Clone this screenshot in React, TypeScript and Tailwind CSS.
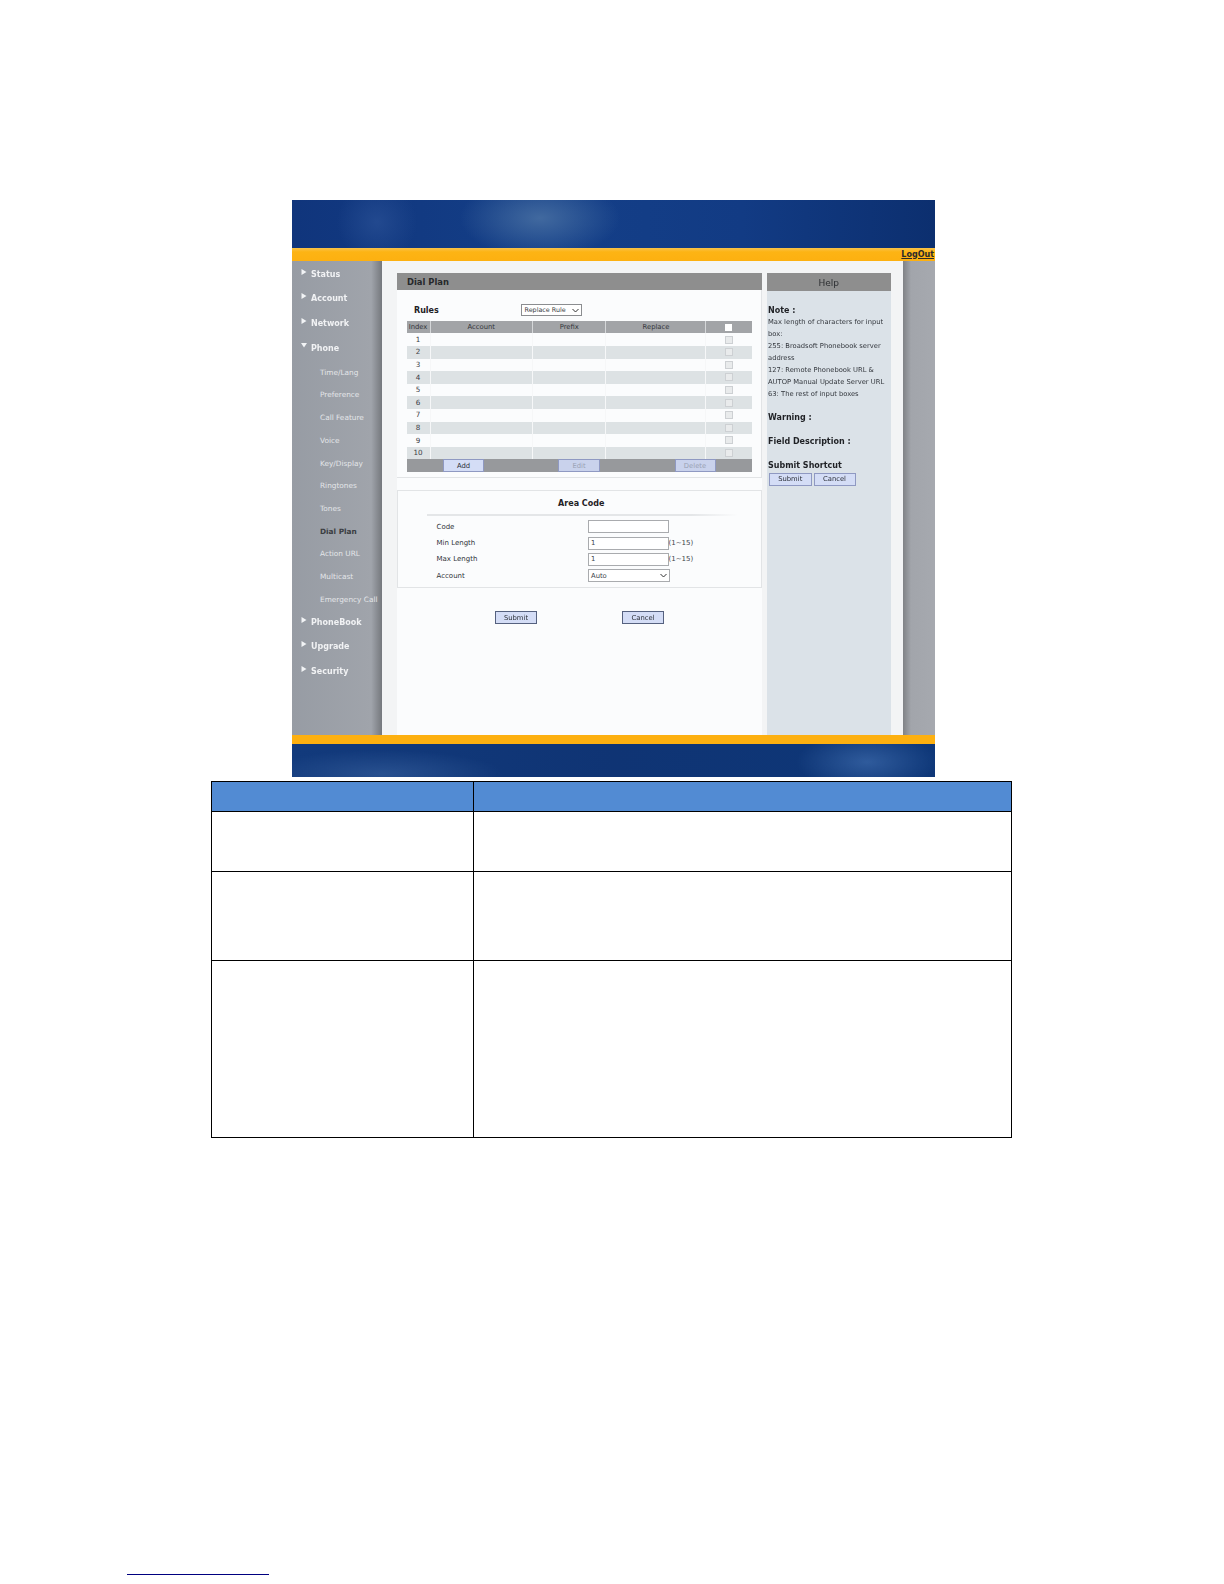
const font = "[font-family:'DejaVu_Sans',Verdana,sans-serif]";

function Tri({ down = false }: { down?: boolean }) {
  return (
    <svg width="6" height="6" viewBox="0 0 6 6" className="absolute left-[9px] top-[6px]">
      <polygon points={down ? "0,1 6,1 3,5.5" : "0.5,0 5.5,3 0.5,6"} fill="#f2f4f6" />
    </svg>
  );
}

function Top({ label, down = false }: { label: string; down?: boolean }) {
  return (
    <div className="relative h-[24.6px] pl-[19px] flex items-center text-[8px] font-bold text-[#f1f2f4]">
      <Tri down={down} />
      <span>{label}</span>
    </div>
  );
}

function Sub({ label, active = false }: { label: string; active?: boolean }) {
  return (
    <div className={`h-[22.7px] pl-[28px] flex items-center whitespace-nowrap text-[7.35px] ${active ? "font-bold text-[#3a3d42]" : "text-[#e4e6e9]"}`}>
      {label}
    </div>
  );
}

function Btn({ label, w, faded = false, dark = false }: { label: string; w: string; faded?: boolean; dark?: boolean }) {
  return (
    <div className={`${w} h-[13px] pt-[1px] flex items-center justify-center text-[6.8px] border ${dark ? "border-[#55617f]" : "border-[#8f99c2]"} ${faded ? "bg-[#c9d2ec] text-[#9aa2b5]" : "bg-[#d4ddf6] text-[#2c3038]"}`}>
      {label}
    </div>
  );
}

function Field({ label, value, tail }: { label: string; value?: string; tail?: boolean }) {
  return (
    <div className="flex items-center h-[16.4px]">
      <div className="w-[190px] pl-[38.5px] text-[7px] text-[#30343a]">{label}</div>
      <div className="w-[80.5px] h-[13px] bg-white border border-[#a9abae] pl-[2px] flex items-center text-[6.8px] text-[#40444a]">{value}</div>
      {tail && <div className="text-[7px] text-[#40444a]">(1~15)</div>}
    </div>
  );
}

function Note({ children }: { children: string }) {
  return <div className="h-[12px] leading-[12px] text-[6.75px] whitespace-nowrap text-[#33373d]">{children}</div>;
}

export default function App() {
  const rows = [1, 2, 3, 4, 5, 6, 7, 8, 9, 10];
  return (
    <div className={`${font} relative w-[1224px] h-[1584px] bg-white overflow-hidden flex flex-col`}>
      <div className="ml-[292px] mt-[200px] w-[643px] h-[577px] flex flex-col blur-[0.4px]">
        <div className="h-[48px] bg-[radial-gradient(ellipse_80px_40px_at_248px_18px,#41699f_0%,#2f5a9f00_100%),radial-gradient(circle_40px_at_85px_22px,#22498f_0%,#22498f00_100%),linear-gradient(90deg,#10357c_0%,#143f88_40%,#123b84_70%,#0c2f6f_100%)]" />
        <div className="h-[13px] bg-[linear-gradient(180deg,#f8c24a_0%,#fdb414_30%,#fdb010_100%)] flex items-center justify-end pr-[1px]">
          <span className="text-[8px] font-bold text-[#2a2a2a] underline">LogOut</span>
        </div>
        <div className="h-[474px] flex">
          <div className="w-[90px] bg-[linear-gradient(90deg,#979ca4_0%,#a0a4ab_88%,#75787d_100%)] pt-[1.6px]">
            <Top label="Status" />
            <Top label="Account" />
            <Top label="Network" />
            <Top label="Phone" down />
            <Sub label="Time/Lang" />
            <Sub label="Preference" />
            <Sub label="Call Feature" />
            <Sub label="Voice" />
            <Sub label="Key/Display" />
            <Sub label="Ringtones" />
            <Sub label="Tones" />
            <Sub label="Dial Plan" active />
            <Sub label="Action URL" />
            <Sub label="Multicast" />
            <Sub label="Emergency Call" />
            <Top label="PhoneBook" />
            <Top label="Upgrade" />
            <Top label="Security" />
          </div>
          <div className="w-[521px] bg-[#f3f4f5] pl-[15px] pt-[12px] flex gap-[5.5px]">
            <div className="w-[364.5px] bg-[#fbfcfd] flex flex-col">
              <div className="h-[17px] bg-[#8e8e8e] pl-[10px] pt-[1px] flex items-center text-[8.4px] font-bold text-[#26282b]">Dial Plan</div>
              <div className="h-[188px] border-b border-[#e2e4e6] border-r flex flex-col">
                <div className="h-[31px] flex items-center">
                  <div className="w-[123.5px] pl-[17px] pt-[11px] text-[8px] font-bold text-[#1f2125]">Rules</div>
                  <div className="mt-[9px] w-[61px] h-[11.5px] border border-[#8b8d90] bg-white flex items-center justify-between pl-[3px] pr-[2px] pt-[1px] text-[6.4px] text-[#3a3e44]">
                    <span>Replace Rule</span>
                    <svg width="7" height="5" viewBox="0 0 7 5"><path d="M0.5 1 L3.5 4 L6.5 1" fill="none" stroke="#333" strokeWidth="1" /></svg>
                  </div>
                </div>
                <div className="ml-[9.5px] w-[345px] text-[6.8px] text-[#3c4046]">
                  <div className="flex h-[12.4px] bg-[#a2a4a7] text-[#33363b] text-center leading-[13.6px]">
                    <div className="w-[24px] border-r border-[#d5d7d9]">Index</div>
                    <div className="w-[102.6px] border-r border-[#d5d7d9]">Account</div>
                    <div className="w-[73.4px] border-r border-[#d5d7d9]">Prefix</div>
                    <div className="w-[100px] border-r border-[#d5d7d9]">Replace</div>
                    <div className="flex-1 flex items-center justify-center"><div className="w-[7px] h-[7px] bg-white" /></div>
                  </div>
                  {rows.map((r) => (
                    <div key={r} className={`flex h-[12.6px] items-center ${r % 2 ? "bg-[#fbfcfd]" : "bg-[#dde2e4]"}`}>
                      <div className="w-[24px] h-full pt-[1px] flex items-center justify-center text-[7.2px] border-r border-[#f6f7f8]">{r}</div>
                      <div className="w-[102.6px] h-full border-r border-[#f6f7f8]" />
                      <div className="w-[73.4px] h-full border-r border-[#f6f7f8]" />
                      <div className="w-[100px] h-full border-r border-[#f6f7f8]" />
                      <div className="flex-1 flex items-center justify-center"><div className="w-[8px] h-[8px] border border-[#cdd0d3] bg-[#e9ebec]" /></div>
                    </div>
                  ))}
                  <div className="relative flex h-[12.4px] bg-[#97999c]">
                    <div className="ml-[36.5px]"><Btn label="Add" w="w-[41px]" /></div>
                    <div className="ml-[74px]"><Btn label="Edit" w="w-[42px]" faded /></div>
                    <div className="ml-[74.5px]"><Btn label="Delete" w="w-[41px]" faded /></div>
                  </div>
                </div>
              </div>
              <div className="mt-[12px] h-[98px] border border-[#e2e4e6] flex flex-col">
                <div className="h-[23px] pl-[4px] pt-[2px] flex items-center justify-center text-[8px] font-bold text-[#1f2125]">Area Code</div>
                <div className="ml-[29px] w-[311px] h-[2px] bg-[linear-gradient(90deg,#e4e6e8_0%,#e4e6e8_85%,#e4e6e800_100%)]" />
                <div className="mt-[2.6px]">
                  <Field label="Code" />
                  <Field label="Min Length" value="1" tail />
                  <Field label="Max Length" value="1" tail />
                  <div className="flex items-center h-[16.4px]">
                    <div className="w-[190px] pl-[38.5px] text-[7px] text-[#30343a]">Account</div>
                    <div className="w-[82px] h-[13px] bg-white border border-[#a9abae] px-[2px] flex items-center justify-between text-[6.8px] text-[#40444a]">
                      <span>Auto</span>
                      <svg width="7" height="5" viewBox="0 0 7 5"><path d="M0.5 1 L3.5 4 L6.5 1" fill="none" stroke="#333" strokeWidth="1" /></svg>
                    </div>
                  </div>
                </div>
              </div>
              <div className="mt-[23px] flex">
                <div className="ml-[98px]"><Btn label="Submit" w="w-[42px]" dark /></div>
                <div className="ml-[85px]"><Btn label="Cancel" w="w-[42px]" dark /></div>
              </div>
            </div>
            <div className="w-[123.5px] bg-[#dbe2e8] flex flex-col">
              <div className="h-[18px] bg-[#8e8e8e] pt-[3px] flex items-center justify-center text-[9px] text-[#2c2e31]">Help</div>
              <div className="pl-[1px] pt-[14px] flex flex-col">
                <div className="h-[11px] leading-[12px] text-[8px] font-bold text-[#1f2125]">Note :</div>
                <Note>Max length of characters for input</Note>
                <Note>box:</Note>
                <Note>255: Broadsoft Phonebook server</Note>
                <Note>address</Note>
                <Note>127: Remote Phonebook URL &amp;</Note>
                <Note>AUTOP Manual Update Server URL</Note>
                <Note>63: The rest of input boxes</Note>
                <div className="mt-[12px] h-[12px] leading-[12px] text-[8px] font-bold text-[#1f2125]">Warning :</div>
                <div className="mt-[11.5px] h-[12px] leading-[12px] text-[8px] font-bold text-[#1f2125]">Field Description :</div>
                <div className="mt-[12px] h-[12px] leading-[12px] text-[8px] font-bold text-[#1f2125]">Submit Shortcut</div>
                <div className="ml-[1px] mt-[1px] flex gap-[2px]">
                  <Btn label="Submit" w="w-[42.5px]" />
                  <Btn label="Cancel" w="w-[42px]" />
                </div>
              </div>
            </div>
          </div>
          <div className="w-[32px] bg-[linear-gradient(90deg,#808286_0%,#a2a5ab_25%,#a6a9af_100%)]" />
        </div>
        <div className="h-[8.5px] bg-[#fdb010]" />
        <div className="h-[33.5px] bg-[radial-gradient(ellipse_70px_30px_at_575px_18px,#2f5b9c_0%,#2f5b9c00_100%),radial-gradient(ellipse_120px_24px_at_90px_30px,#28508f_0%,#28508f00_100%),linear-gradient(90deg,#123a7c_0%,#0f3474_50%,#0e3778_100%)]" />
      </div>
      <div className="ml-[211px] mt-[4px] w-[801px] h-[357px] grid grid-cols-[262px_1fr] grid-rows-[29.5px_60.5px_89px_1fr] border border-black">
        <div className="bg-[#528bd3] border-r border-b border-black" />
        <div className="bg-[#528bd3] border-b border-black" />
        <div className="border-r border-b border-black" />
        <div className="border-b border-black" />
        <div className="border-r border-b border-black" />
        <div className="border-b border-black" />
        <div className="border-r border-black" />
        <div />
      </div>
      <div className="ml-[126.5px] mt-[436px] w-[142.5px] h-px bg-[#000080]" />
    </div>
  );
}
